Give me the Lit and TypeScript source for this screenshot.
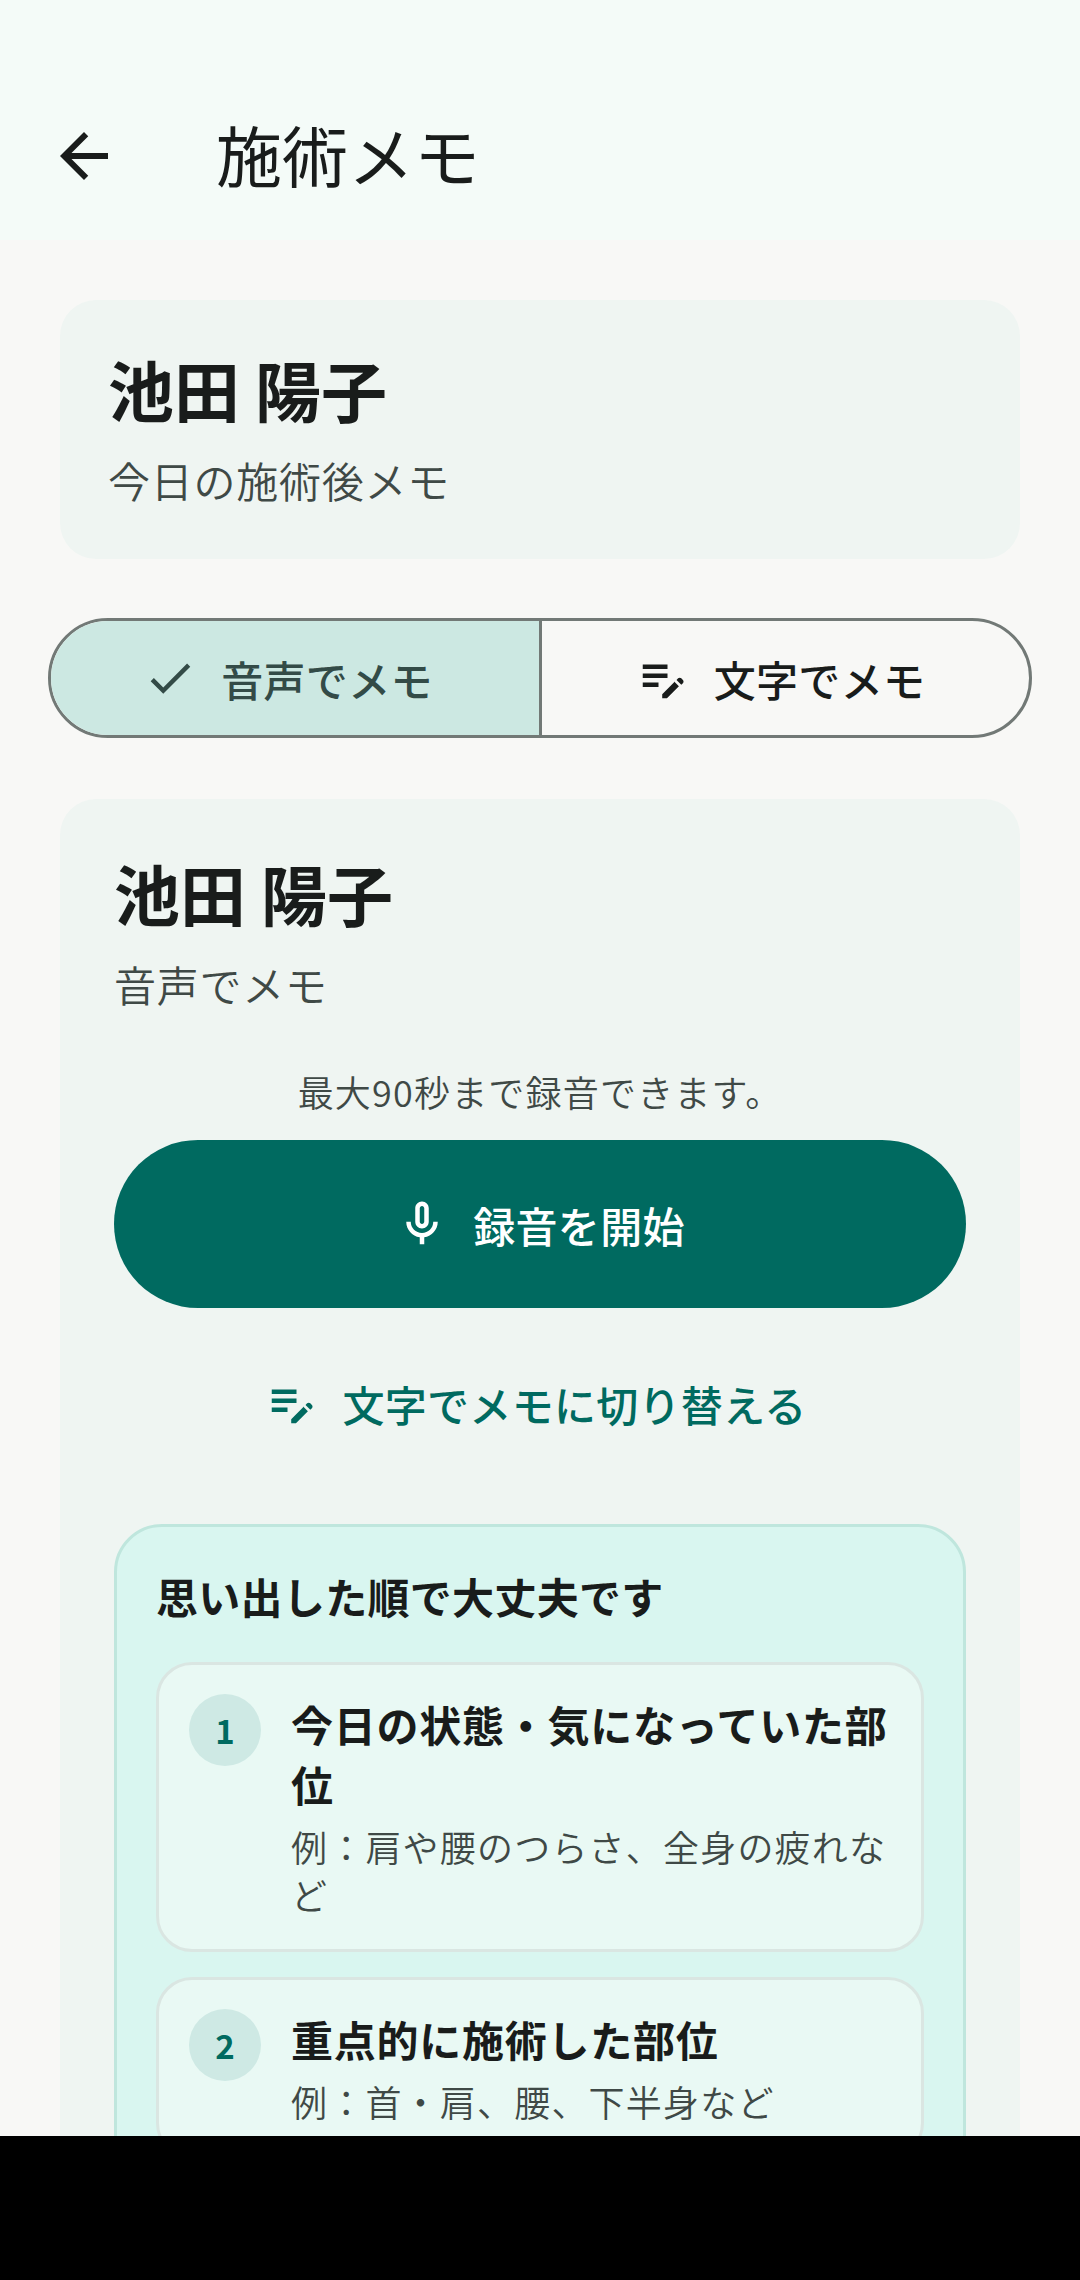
import { LitElement, html, css, svg } from "lit";
import { customElement } from "lit/decorators.js";

const ICONS = {
  back: svg`<path d="M20 11H7.83l5.59-5.59L12 4l-8 8 8 8 1.41-1.41L7.83 13H20v-2z"/>`,
  check: svg`<path d="M9 16.17 4.83 12l-1.42 1.41L9 19 21 7l-1.41-1.41z"/>`,
  note: svg`<path d="M3 10h11v2H3v-2zm0-2h11V6H3v2zm0 8h7v-2H3v2zm15.01-3.13.71-.71c.39-.39 1.02-.39 1.41 0l.71.71c.39.39.39 1.02 0 1.41l-.71.71-2.12-2.12zm-1.06 1.06-5.3 5.3V21h2.12l5.3-5.3-2.12-2.12z"/>`,
  mic: svg`<path d="M12 14c1.66 0 3-1.34 3-3V5c0-1.66-1.34-3-3-3S9 3.34 9 5v6c0 1.66 1.34 3 3 3zm-1-9c0-.55.45-1 1-1s1 .45 1 1v6c0 .55-.45 1-1 1s-1-.45-1-1V5zm6 6c0 2.76-2.24 5-5 5s-5-2.24-5-5H5c0 3.53 2.61 6.43 6 6.92V21h2v-3.08c3.39-.49 6-3.39 6-6.92h-2z"/>`,
};

const icon = (name: keyof typeof ICONS, cls = "ic") =>
  html`<svg class=${cls} viewBox="0 0 24 24" fill="currentColor">${ICONS[name]}</svg>`;

const STEPS = [
  { n: "1", t: "今日の状態・気になっていた部位", s: "例：肩や腰のつらさ、全身の疲れなど" },
  { n: "2", t: "重点的に施術した部位", s: "例：首・肩、腰、下半身など" },
];

@customElement("app-root")
export class AppRoot extends LitElement {
  static styles = css`
    :host {
      display: flex;
      flex-direction: column;
      width: 1080px;
      height: 2280px;
      overflow: hidden;
      background: #f8f8f6;
      color: #191c1b;
      font-family: "Noto Sans CJK JP", "Noto Sans", sans-serif;
    }
    .ic { width: 54px; height: 54px; flex: none; display: block; }
    .screen { flex: 1; min-height: 0; overflow: hidden; }
    .bar {
      height: 240px;
      box-sizing: border-box;
      padding: 72px 0 0 48px;
      background: #f4fbf8;
      display: flex;
      align-items: center;
      gap: 96px;
    }
    .back { width: 72px; height: 72px; flex: none; display: block; }
    .bar h1 { margin: 0 0 6px; font-size: 66px; line-height: 88px; font-weight: 400; }
    .content { padding: 60px 60px 0; display: flex; flex-direction: column; gap: 60px; }
    .card { background: #eff5f2; border-radius: 36px; }
    .head { padding: 49px 48px 49px; }
    .name { font-size: 66px; line-height: 78px; font-weight: 700; }
    .sub { font-size: 42px; line-height: 60px; letter-spacing: 0.75px; font-weight: 350; color: #3f4946; margin-top: 23px; }
    .seg {
      display: flex;
      margin: -1px -12px 1px;
      height: 120px;
      box-sizing: border-box;
      border: 3px solid #727976;
      border-radius: 60px;
      overflow: hidden;
    }
    .opt {
      flex: 1 1 0;
      box-sizing: border-box;
      display: flex;
      align-items: center;
      justify-content: center;
      gap: 24px;
      padding-right: 10px;
      font-size: 42px;
      letter-spacing: 0.3px;
      font-weight: 500;
    }
    .opt.on { flex: 0 0 491px; background: #cce8e2; color: #334b47; border-right: 3px solid #727976; padding-right: 14px; }
    .main { padding: 54px 54px 0; }
    .hint { font-size: 36px; line-height: 48px; letter-spacing: 1.2px; font-weight: 350; color: #3f4946; text-align: center; margin-top: 53px; }
    .rec {
      margin-top: 25px;
      height: 168px;
      border-radius: 84px;
      background: #006a60;
      color: #fff;
      display: flex;
      align-items: center;
      justify-content: center;
      gap: 24px;
      font-size: 42px;
      letter-spacing: 0.3px;
      font-weight: 500;
    }
    .switch {
      height: 120px;
      margin-top: 35px;
      padding-right: 8px;
      display: flex;
      align-items: center;
      justify-content: center;
      gap: 23px;
      color: #006a60;
      font-size: 42px;
      letter-spacing: 0.3px;
      font-weight: 500;
    }
    .guide {
      margin-top: 61px;
      padding: 39px 39px 40px;
      border: 3px solid #bfe6dd;
      border-radius: 48px;
      background: #d9f6f0;
    }
    .guide h2 { margin: 0; font-size: 42px; line-height: 60px; letter-spacing: 0.3px; font-weight: 700; }
    .steps { margin-top: 36px; display: flex; flex-direction: column; gap: 25px; }
    .step {
      display: flex;
      gap: 30px;
      padding: 29px 30px 31px;
      border: 3px solid #dae6e2;
      border-radius: 36px;
      background: #e9f9f4;
    }
    .num {
      flex: none;
      width: 72px;
      height: 72px;
      border-radius: 50%;
      background: #cee9e4;
      color: #006a60;
      font-size: 33px;
      font-weight: 700;
      display: flex;
      align-items: center;
      justify-content: center;
    }
    .body { flex: 1; min-width: 0; }
    .tt { font-size: 42px; line-height: 60px; letter-spacing: 0.75px; font-weight: 700; }
    .ss { font-size: 36px; line-height: 48px; letter-spacing: 1.2px; font-weight: 350; color: #3f4946; margin-top: 8px; }
    .nav { height: 144px; flex: none; background: #000; }
  `;

  render() {
    return html`
      <div class="screen">
        <div class="bar">
          ${icon("back", "back")}
          <h1>施術メモ</h1>
        </div>
        <div class="content">
          <div class="card head">
            <div class="name">池田 陽子</div>
            <div class="sub">今日の施術後メモ</div>
          </div>
          <div class="seg">
            <div class="opt on">${icon("check")}<span>音声でメモ</span></div>
            <div class="opt">${icon("note")}<span>文字でメモ</span></div>
          </div>
          <div class="card main">
            <div class="name">池田 陽子</div>
            <div class="sub">音声でメモ</div>
            <div class="hint">最大90秒まで録音できます。</div>
            <div class="rec">${icon("mic")}<span>録音を開始</span></div>
            <div class="switch">${icon("note")}<span>文字でメモに切り替える</span></div>
            <div class="guide">
              <h2>思い出した順で大丈夫です</h2>
              <div class="steps">
                ${STEPS.map(
                  (x) => html`<div class="step">
                    <div class="num">${x.n}</div>
                    <div class="body">
                      <div class="tt">${x.t}</div>
                      <div class="ss">${x.s}</div>
                    </div>
                  </div>`
                )}
              </div>
            </div>
          </div>
        </div>
      </div>
      <div class="nav"></div>
    `;
  }
}
